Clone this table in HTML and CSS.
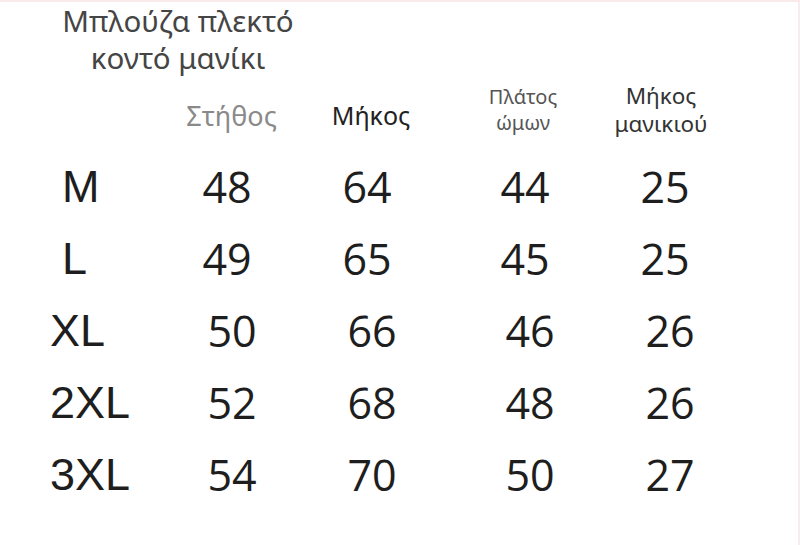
FILE: index.html
```html
<!DOCTYPE html>
<html lang="el">
<head>
<meta charset="utf-8">
<title>Μπλούζα πλεκτό κοντό μανίκι</title>
<link rel="stylesheet" href="styles.css">
</head>
<body>
<div class="page">
  <div class="title">Μπλούζα πλεκτό<br>κοντό μανίκι</div>
  <div class="chart">
    <div class="head empty"></div>
    <div class="head h-chest">Στήθος</div>
    <div class="head h-len">Μήκος</div>
    <div class="head h-shoulder">Πλάτος<br>ώμων</div>
    <div class="head h-sleeve">Μήκος<br>μανικιού</div>

    <div class="size indent">M</div><div class="val">48</div><div class="val">64</div><div class="val">44</div><div class="val">25</div>
    <div class="size indent">L</div><div class="val">49</div><div class="val">65</div><div class="val">45</div><div class="val">25</div>
    <div class="size">XL</div><div class="val shift">50</div><div class="val shift">66</div><div class="val shift">46</div><div class="val shift">26</div>
    <div class="size">2XL</div><div class="val shift">52</div><div class="val shift">68</div><div class="val shift">48</div><div class="val shift">26</div>
    <div class="size">3XL</div><div class="val shift">54</div><div class="val shift">70</div><div class="val shift">50</div><div class="val shift">27</div>
  </div>
</div>
</body>
</html>
```

FILE: styles.css
```css
html, body {
  margin: 0;
  padding: 0;
  background: #ffffff;
}

.page {
  width: 800px;
  height: 545px;
  box-sizing: border-box;
  border-top: 2px solid #fbeaea;
  border-right: 2px solid #f7eded;
  font-family: "Noto Sans", "Open Sans", "DejaVu Sans", sans-serif;
  overflow: hidden;
}

.title {
  width: 356px;
  box-sizing: border-box;
  padding-top: 0;
  height: 76px;
  text-align: center;
  font-size: 29.5px;
  line-height: 37px;
  color: #454545;
}

.chart {
  display: grid;
  grid-template-columns: 160px 140px 140px 176px 104px;
  grid-template-rows: 73px repeat(5, 72px);
}

.head {
  display: flex;
  align-items: center;
  justify-content: center;
  text-align: center;
}

.h-chest {
  font-size: 27px;
  color: #8a8a8a;
  padding-top: 2px;
  margin-left: 3px;
}

.h-len {
  font-size: 25px;
  color: #222222;
  padding-top: 0;
  margin-left: 2px;
}

.h-shoulder {
  font-size: 20px;
  line-height: 26px;
  color: #555555;
  padding-right: 10px;
  padding-bottom: 10px;
}

.h-sleeve {
  font-size: 22.5px;
  line-height: 28px;
  color: #333333;
  margin-left: -14px;
  padding-bottom: 10px;
}

.size,
.val {
  font-family: "Open Sans", "Noto Sans", sans-serif;
  font-size: 43px;
  line-height: 72px;
  color: #1e1e1e;
}

.size {
  font-family: "Liberation Sans", Arial, sans-serif;
  font-size: 45px;
  padding-left: 50px;
}

.size.indent {
  padding-left: 62px;
}

.val {
  text-align: center;
  padding-right: 6px;
}

.val.shift {
  padding-right: 0;
  padding-left: 4px;
}
```
